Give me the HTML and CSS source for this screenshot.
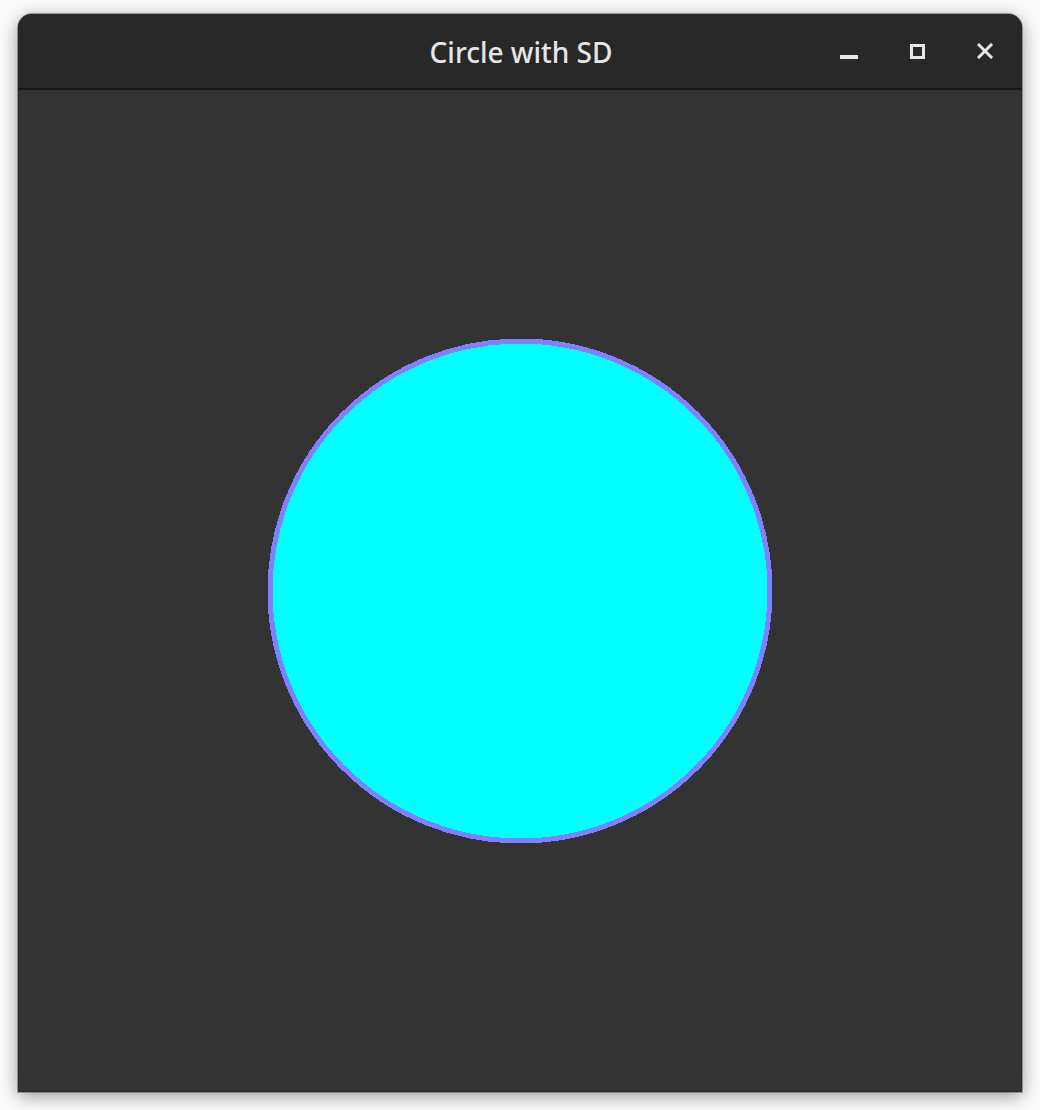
FILE: index.html
```html
<!DOCTYPE html>
<html>
<head>
<meta charset="utf-8">
<link rel="stylesheet" href="styles.css">
</head>
<body>
<div class="window">
  <div class="titlebar">
    <div class="title">Circle with SD</div>
    <div class="controls">
      <span class="btn btn-min"><span class="min-bar"></span></span>
      <span class="btn btn-max"><span class="max-box"></span></span>
      <span class="btn btn-close">
        <svg width="16" height="16" viewBox="0 0 16 16"><path d="M2 2 L14 14 M14 2 L2 14" stroke="#e8e8e8" stroke-width="3" stroke-linecap="square"/></svg>
      </span>
    </div>
  </div>
  <div class="content">
    <svg class="circle" width="510" height="510" viewBox="0 0 510 510" shape-rendering="crispEdges">
      <circle cx="255" cy="255" r="250" fill="#00ffff" stroke="#7f7fff" stroke-width="5"/>
    </svg>
  </div>
</div>
</body>
</html>
```
FILE: styles.css
```css
html, body {
  margin: 0;
  padding: 0;
  background: #fafafa;
  width: 1040px;
  height: 1110px;
  overflow: hidden;
}
body {
  padding-top: 14px;
  padding-left: 18px;
  box-sizing: border-box;
}
.window {
  width: 1004px;
  height: 1078px;
  border-radius: 14px 14px 0 0;
  background: #333333;
  box-shadow: 0 4px 18px rgba(0,0,0,0.4), 0 0 0 1px rgba(0,0,0,0.3);
  display: flex;
  flex-direction: column;
  overflow: hidden;
  font-family: "Noto Sans", "Open Sans", sans-serif;
}
.titlebar {
  height: 74px;
  background: #282828;
  border-bottom: 2px solid #1a1a1a;
  position: relative;
  display: flex;
  align-items: center;
  justify-content: center;
  flex-shrink: 0;
}
.title {
  color: #e6e6e6;
  font-size: 28px;
  font-weight: 500;
  margin-top: 2px;
  margin-left: 2px;
}
.controls {
  position: absolute;
  right: 20px;
  top: 0;
  height: 74px;
  display: flex;
  align-items: center;
  gap: 34px;
}
.btn {
  width: 34px;
  height: 34px;
  display: flex;
  align-items: center;
  justify-content: center;
}
.btn-min .min-bar {
  width: 18px;
  height: 4px;
  background: #e8e8e8;
  margin-top: 11px;
}
.btn-max .max-box {
  width: 15px;
  height: 15px;
  box-sizing: border-box;
  border: 3px solid #e8e8e8;
}
.content {
  flex: 1;
  display: flex;
  align-items: center;
  justify-content: center;
  border-left: 1px solid #2a2a2a;
  border-right: 1px solid #2a2a2a;
  border-bottom: 1px solid #2a2a2a;
}
.circle {
  display: block;
}
```
